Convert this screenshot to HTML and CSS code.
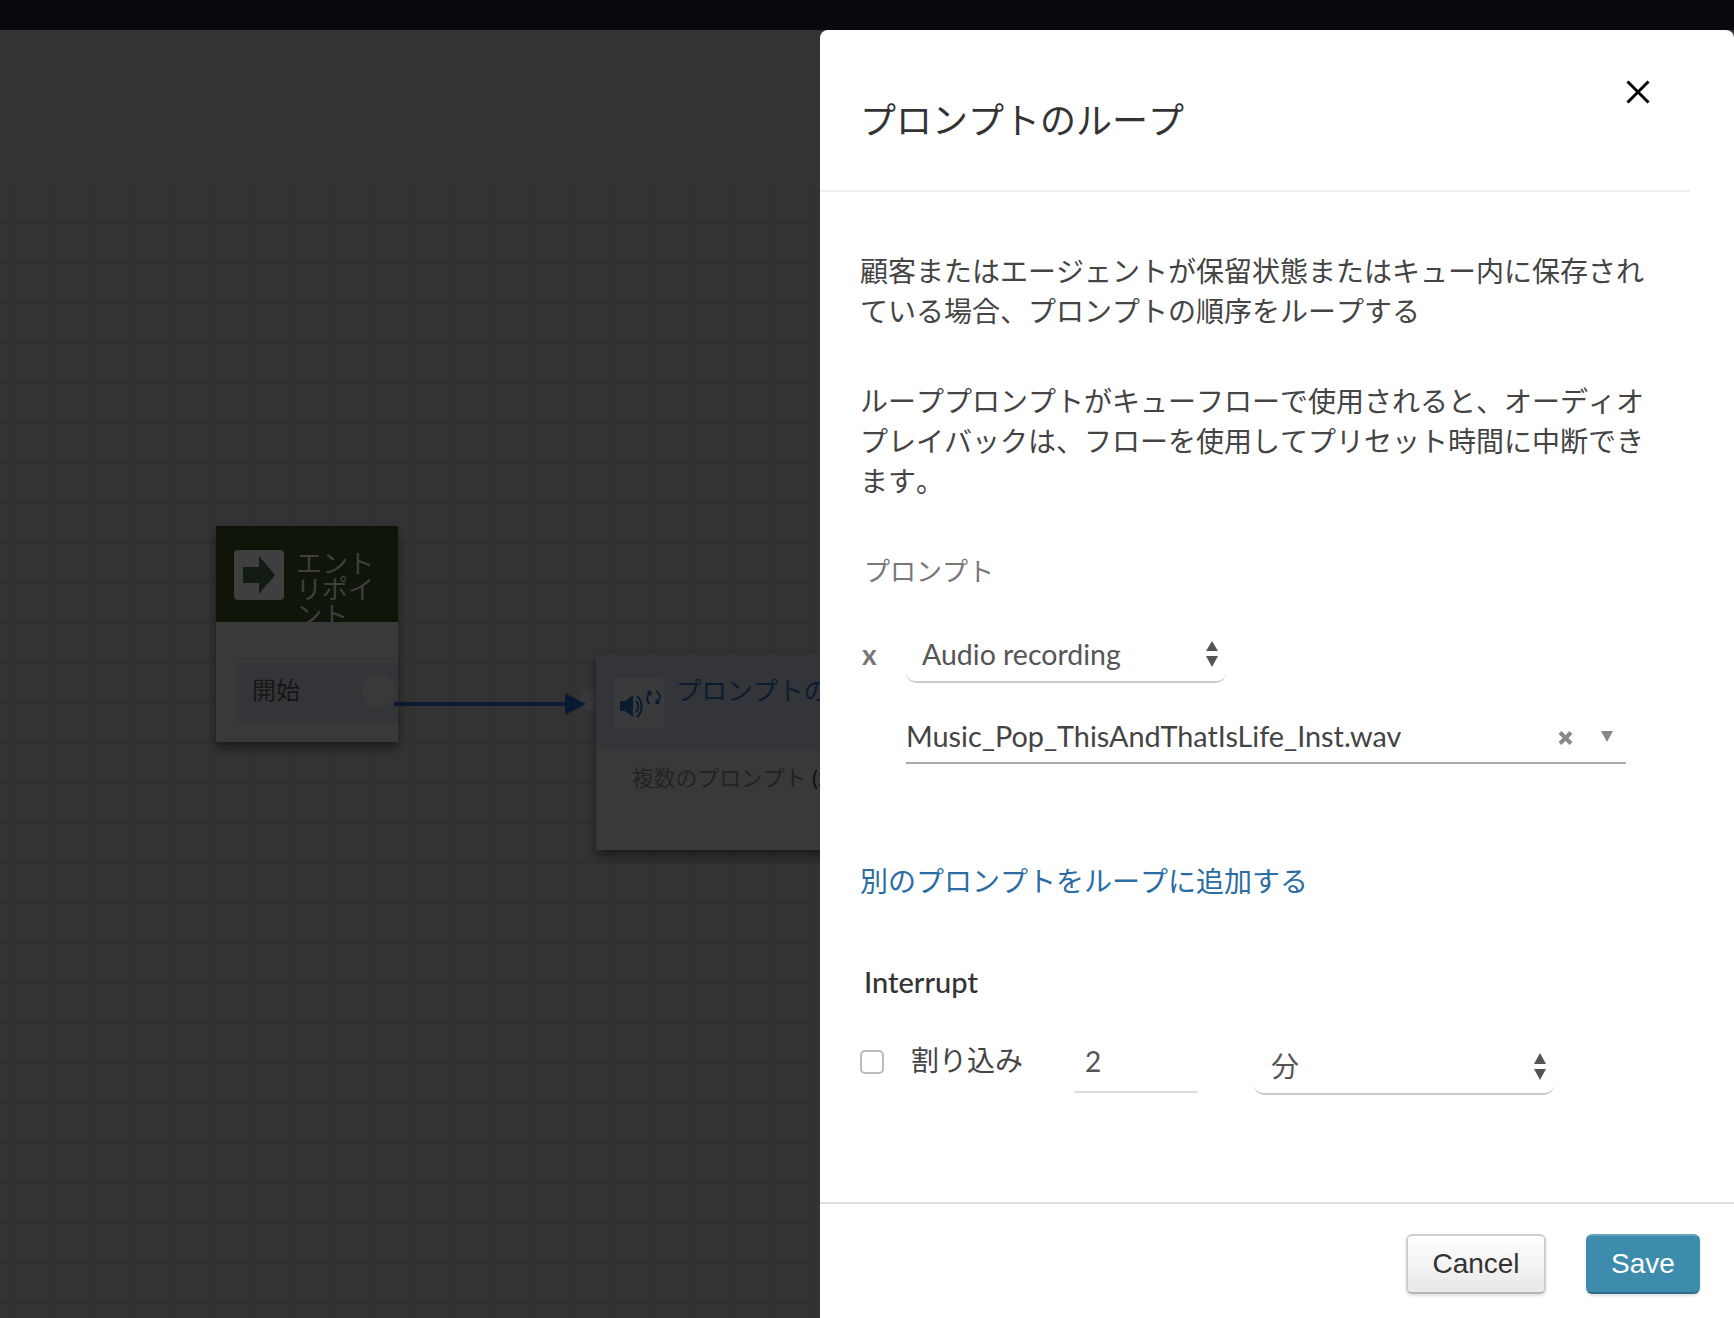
FILE: index.html
```html
<!DOCTYPE html>
<html lang="ja">
<head>
    <meta charset="UTF-8">
    <title>プロンプトのループ</title>
    <link rel="stylesheet" href="styles.css">
</head>
<body>
    <div class="topbar"></div>
    <div class="workspace">
        <div class="canvas">
            <div class="grid"></div>

            <div class="node entry-node">
                <div class="entry-head">
                    <svg class="entry-icon" width="50" height="50" viewBox="0 0 50 50">
                        <rect width="50" height="50" rx="4" fill="#3f3f3f"/>
                        <path d="M9 17H25V6L41 25L25 44V33H9Z" fill="#131c12"/>
                    </svg>
                    <div class="entry-title">エントリポイント</div>
                </div>
                <div class="entry-row">
                    <span>開始</span>
                    <i class="port"></i>
                </div>
            </div>

            <svg class="connector" width="200" height="30" viewBox="0 0 200 30">
                <path d="M0 15H172" stroke="#0a1a33" stroke-width="4"/>
                <path d="M171 4L192 15L171 26Z" fill="#0a1a33"/>
            </svg>
            <i class="port in-port"></i>

            <div class="node prompt-node">
                <div class="prompt-head">
                    <div class="prompt-icon">
                        <svg width="50" height="50" viewBox="0 0 50 50" fill="none" stroke="#0c1c30">
                            <path d="M6 23H11L19 17V39L11 33H6Z" fill="#0c1c30" stroke="none"/>
                            <path d="M22 23C25 26 25 31 22 34" stroke-width="2"/>
                            <path d="M23 18C29 23 29 34 23 39" stroke-width="2"/>
                            <path d="M36 26C32 23 32 17 37 14M37 14L33.5 13.5M37 14L36 17.5" stroke-width="2"/>
                            <path d="M42 13C47 16 47 22 42 25M42 25L45.5 25.5M42 25L43 21.5" stroke-width="2"/>
                        </svg>
                    </div>
                    <div class="prompt-title">プロンプトのループ</div>
                </div>
                <div class="prompt-body">複数のプロンプト <span class="prompt-count">(2)</span></div>
            </div>
        </div>

        <div class="panel">
            <div class="panel-head">
                <h1>プロンプトのループ</h1>
            </div>
            <svg class="close" width="24" height="24" viewBox="0 0 24 24">
                <path d="M1.5 1.5L22.5 22.5M22.5 1.5L1.5 22.5" stroke="#000" stroke-width="3"/>
            </svg>

            <div class="panel-body">
                <p class="intro first">顧客またはエージェントが保留状態またはキュー内に保存されている場合、プロンプトの順序をループする</p>
                <p class="intro">ループプロンプトがキューフローで使用されると、オーディオプレイバックは、フローを使用してプリセット時間に中断できます。</p>

                <div class="field-label">プロンプト</div>

                <div class="prompt-row">
                    <span class="remove">x</span>
                    <div class="select type-select">
                        <span>Audio recording</span>
                        <svg width="12" height="26" viewBox="0 0 12 26"><path d="M6 0L12 10H0ZM0 15H12L6 26Z" fill="#555"/></svg>
                    </div>
                </div>

                <div class="file-field">
                    <span class="file-name">Music_Pop_ThisAndThatIsLife_Inst.wav</span>
                    <svg class="clear" width="15" height="14" viewBox="0 0 15 14"><path d="M2 1.5L13 12.5M13 1.5L2 12.5" stroke="#888" stroke-width="4"/></svg>
                    <svg class="caret" width="12" height="11" viewBox="0 0 12 11"><path d="M0 0H12L6 11Z" fill="#888"/></svg>
                </div>

                <a class="add-link" href="#">別のプロンプトをループに追加する</a>

                <div class="interrupt-label">Interrupt</div>

                <div class="interrupt-row">
                    <input class="check" type="checkbox">
                    <label class="check-label">割り込み</label>
                    <input class="minutes" type="text" value="2">
                    <div class="select unit-select">
                        <span>分</span>
                        <svg width="12" height="27" viewBox="0 0 12 27"><path d="M6 0L12 11H0ZM0 16H12L6 27Z" fill="#555"/></svg>
                    </div>
                </div>
            </div>

            <div class="panel-foot">
                <button class="btn cancel">Cancel</button>
                <button class="btn save">Save</button>
            </div>
        </div>
    </div>
</body>
</html>
```

FILE: styles.css
```css
html, body {
    margin: 0;
    height: 100%;
    overflow: hidden;
}
body {
    display: flex;
    flex-direction: column;
    background-color: #333;
    font-family: Lato, 'Noto Sans CJK JP', sans-serif;
    font-kerning: none;
    color: #444;
    text-spacing-trim: space-all;
}
.topbar {
    height: 30px;
    background-color: #07090e;
}
.workspace {
    flex: 1;
    display: flex;
    background-color: #333;
}

/* flow canvas behind the dialog */
.canvas {
    position: relative;
    flex: 1;
    overflow: hidden;
    background-color: #333;
}
.grid {
    position: absolute;
    top: 154px;
    left: 0;
    right: 0;
    bottom: 0;
    background-image:
        linear-gradient(#303030 2px, transparent 2px),
        linear-gradient(90deg, #303030 2px, transparent 2px);
    background-size: 40px 40px;
    background-position: 10px 38px;
}
.node {
    position: absolute;
    background-color: #393939;
    box-shadow: 0 6px 10px rgba(0,0,0,0.45);
}
.entry-node {
    left: 216px;
    top: 496px;
    width: 182px;
    height: 216px;
}
.entry-head {
    display: flex;
    gap: 12px;
    height: 96px;
    padding: 24px 0 0 18px;
    box-sizing: border-box;
    background-color: #0f1509;
    overflow: hidden;
}
.entry-title {
    width: 80px;
    font-size: 26px;
    line-height: 26px;
    color: #3f3f3f;
}
.entry-row {
    display: flex;
    align-items: center;
    justify-content: space-between;
    height: 59px;
    margin: 41px 0 0 20px;
    padding: 0 3px 8px 16px;
    box-sizing: border-box;
    background-color: #333538;
    font-size: 24px;
    color: #161616;
}
.port {
    display: block;
    width: 34px;
    height: 34px;
    margin-top: 4px;
    border-radius: 50%;
    background-color: #393939;
}
.in-port {
    position: absolute;
    left: 580px;
    top: 655px;
    width: 22px;
    height: 22px;
}
.connector {
    position: absolute;
    left: 394px;
    top: 659px;
    z-index: 2;
}
.prompt-node {
    left: 596px;
    top: 624px;
    width: 300px;
    height: 196px;
    overflow: hidden;
}
.prompt-head {
    display: flex;
    gap: 12px;
    height: 96px;
    padding: 24px 0 0 18px;
    box-sizing: border-box;
    background-color: #333538;
}
.prompt-icon {
    width: 50px;
    height: 50px;
    background-color: #383a3c;
    border-radius: 3px;
}
.prompt-title {
    margin-top: -3px;
    font-size: 25.5px;
    line-height: 30px;
    white-space: nowrap;
    color: #0c1c30;
}
.prompt-body {
    padding: 12px 0 0 36px;
    font-size: 21.8px;
    line-height: 32px;
    white-space: nowrap;
    color: #232323;
}
.prompt-count {
    color: #0c0c0c;
}

/* dialog */
.panel {
    position: relative;
    display: flex;
    flex-direction: column;
    width: 914px;
    background-color: white;
    border-radius: 8px 8px 0 0;
}
.panel-head {
    height: 160px;
    margin-right: 44px;
    padding-left: 40px;
    border-bottom: 2px solid #eee;
}
.panel-head h1 {
    margin: 0;
    padding-top: 68px;
    font-size: 36px;
    font-weight: 400;
    line-height: 44px;
    color: #333;
}
.close {
    position: absolute;
    left: 806px;
    top: 50px;
}
.panel-body {
    flex: 1;
    padding-left: 40px;
}
.intro {
    width: 800px;
    margin: 50px 0 0;
    font-size: 28px;
    font-weight: 400;
    line-height: 40px;
    color: #444;
}
.intro.first {
    margin-top: 59px;
}
.field-label {
    margin: 55px 0 0 4px;
    font-size: 26px;
    font-weight: 400;
    line-height: 30px;
    color: #777;
}
.prompt-row {
    display: flex;
    align-items: flex-start;
    margin-top: 44px;
}
.remove {
    width: 44px;
    padding: 8px 0 0 2px;
    font-size: 28px;
    font-weight: 700;
    line-height: 32px;
    color: #777;
}
.select {
    display: flex;
    align-items: center;
    justify-content: space-between;
    box-sizing: border-box;
    background-color: white;
    border-bottom: 2px solid #ccc;
    border-radius: 0 0 10px 10px;
    color: #555;
    font-size: 28.5px;
    font-kerning: normal;
}
.type-select {
    width: 320px;
    height: 53px;
    padding: 0 8px 4px 16px;
}
.file-field {
    display: flex;
    align-items: center;
    box-sizing: border-box;
    width: 720px;
    height: 57px;
    margin: 24px 0 0 46px;
    padding-top: 2px;
    border-bottom: 2px solid #aaa;
}
.file-name {
    flex: 1;
    font-size: 28.8px;
    font-kerning: normal;
    color: #444;
}
.clear {
    margin: 4px 28px 0 0;
}
.caret {
    margin: 2px 13px 0 0;
}
.add-link {
    display: block;
    margin-top: 97px;
    font-size: 28px;
    font-weight: 400;
    line-height: 40px;
    color: #2a6ca3;
    text-decoration: none;
}
.interrupt-label {
    margin: 61px 0 0 4px;
    font-size: 29px;
    font-weight: 500;
    font-kerning: normal;
    line-height: 40px;
    color: #333;
}
.interrupt-row {
    display: flex;
    align-items: flex-start;
    margin-top: 48px;
}
.check {
    appearance: none;
    box-sizing: border-box;
    width: 24px;
    height: 24px;
    margin: 0 27px 0 0;
    background-color: white;
    border: 2px solid #bbb;
    border-radius: 5px;
}
.check-label {
    width: 163px;
    margin-top: -10px;
    font-size: 28px;
    font-weight: 400;
    line-height: 40px;
    color: #444;
}
.minutes {
    box-sizing: border-box;
    width: 124px;
    height: 63px;
    margin-top: -20px;
    padding: 0 0 0 11px;
    border: 0;
    border-bottom: 2px solid #ddd;
    outline: 0;
    font-family: Lato, sans-serif;
    font-size: 28px;
    color: #555;
}
.unit-select {
    width: 300px;
    height: 65px;
    margin: -20px 0 0 56px;
    padding: 6px 8px 0 17px;
    font-size: 28px;
}
.unit-select svg {
    margin-top: 3px;
}
.panel-foot {
    display: flex;
    justify-content: flex-end;
    gap: 40px;
    height: 116px;
    padding: 30px 34px 0 0;
    box-sizing: border-box;
    border-top: 2px solid #ddd;
}
.btn {
    box-sizing: border-box;
    height: 60px;
    border-radius: 6px;
    font-family: 'Liberation Sans', Arial, sans-serif;
    font-size: 28px;
    font-kerning: normal;
    box-shadow: 0 2px 3px rgba(0,0,0,0.12);
}
.cancel {
    width: 140px;
    color: #333;
    background: linear-gradient(#fff, #e8e8e8);
    border: 2px solid #d0d0d0;
    border-bottom-color: #b5b5b5;
}
.save {
    width: 114px;
    color: white;
    background-color: #3d8cae;
    border: 2px solid #3d8cae;
    border-top-color: #62a3bf;
    border-bottom-color: #2d6f8c;
}
```
